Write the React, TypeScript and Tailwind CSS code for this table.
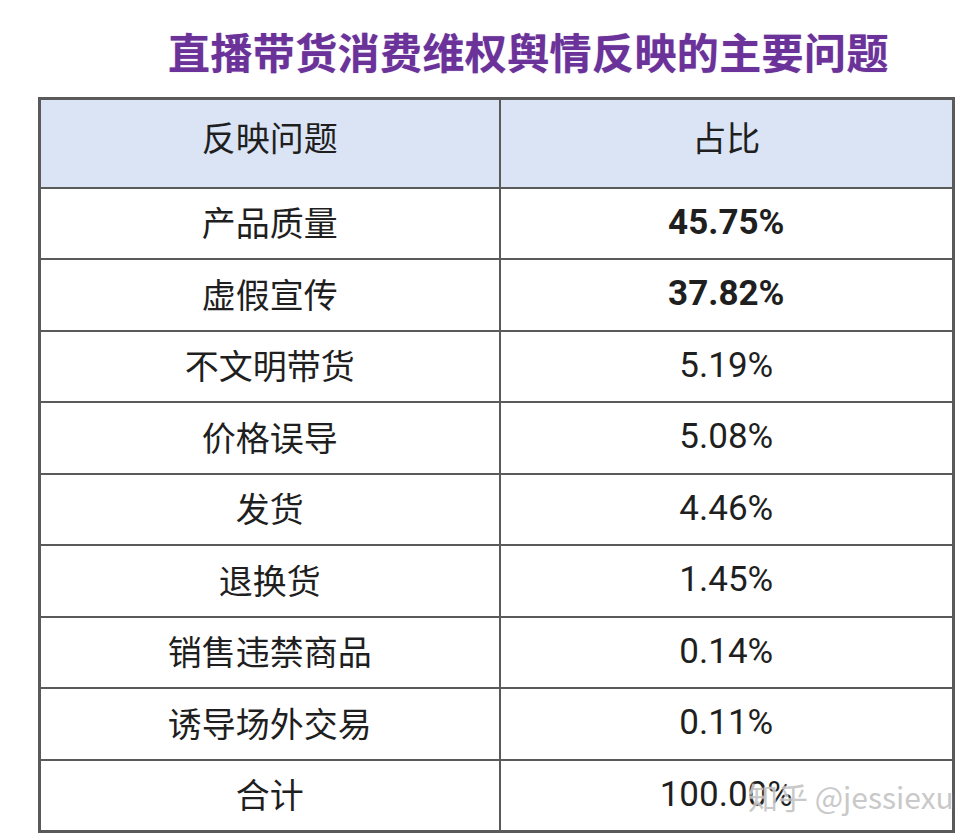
import React from "react"

const rows = [
  { name: "产品质量", pct: "45.75%", bold: true },
  { name: "虚假宣传", pct: "37.82%", bold: true },
  { name: "不文明带货", pct: "5.19%" },
  { name: "价格误导", pct: "5.08%" },
  { name: "发货", pct: "4.46%" },
  { name: "退换货", pct: "1.45%" },
  { name: "销售违禁商品", pct: "0.14%" },
  { name: "诱导场外交易", pct: "0.11%" },
  { name: "合计", pct: "100.00%" },
]

const cjk = { fontFamily: '"Noto Sans CJK SC", "Noto Sans", sans-serif' }
const num = { fontFamily: 'Roboto, "Noto Sans", sans-serif' }

export default function App() {
  return (
    <div className="relative w-[974px] h-[840px] bg-white overflow-hidden" style={cjk}>
      <div className="pt-[24px] pl-[168px] h-[97px]">
        <h1 className="text-[42px] leading-[54px] font-bold tracking-[0.4px] text-[#6b3399] [text-shadow:0_0_1px_rgba(107,51,153,0.5)]">
          直播带货消费维权舆情反映的主要问题
        </h1>
      </div>

      <table className="ml-[38px] w-[914px] border-collapse border-[3px] border-[#5a5a5a] text-[#1f1f1f] table-fixed">
        <colgroup>
          <col className="w-[460px]" />
          <col className="w-[454px]" />
        </colgroup>
        <thead>
          <tr className="h-[89px] bg-[#dae4f4]">
            <th className="border-2 border-[#5a5a5a] pb-[14px] text-[34px] font-normal text-center">反映问题</th>
            <th className="border-2 border-[#5a5a5a] pb-[14px] text-[34px] font-normal text-center">占比</th>
          </tr>
        </thead>
        <tbody>
          {rows.map((r) => (
            <tr key={r.name} className="h-[71.5px]">
              <td className="border-2 border-[#5a5a5a] pb-[2px] text-[34px] text-center leading-none">{r.name}</td>
              <td
                className={
                  r.bold
                    ? "border-2 border-[#5a5a5a] pb-[2px] text-[35px] text-center leading-none font-bold"
                    : "border-2 border-[#5a5a5a] pb-[2px] text-[35px] text-center leading-none"
                }
                style={num}
              >
                {r.pct}
              </td>
            </tr>
          ))}
        </tbody>
      </table>

      <div
        className="absolute left-[748px] top-[776px] text-[30px] leading-[40px] text-[#c4c4c4] opacity-90 [text-shadow:0_0_2px_#ffffff,0_0_1px_#ffffff]"
        style={cjk}
      >
        知乎 @jessiexu
      </div>
    </div>
  )
}
